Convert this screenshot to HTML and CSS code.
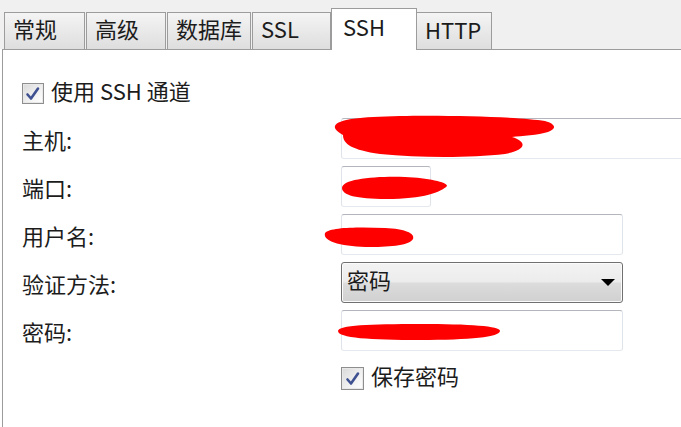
FILE: index.html
```html
<!DOCTYPE html>
<html lang="zh-CN">
<head>
<meta charset="utf-8">
<title>SSH</title>
<link rel="stylesheet" href="styles.css">
</head>
<body>
<div class="window">
  <div class="tabbar">
    <div class="tab t1">常规</div>
    <div class="tab t2">高级</div>
    <div class="tab t3">数据库</div>
    <div class="tab t4">SSL</div>
    <div class="tab active">SSH</div>
    <div class="tab t6">HTTP</div>
  </div>
  <div class="panel">
    <div class="check-row">
      <span class="checkbox"><svg viewBox="0 0 22 22" width="22" height="22"><path d="M5.5 11.5 L9 15.5 L16 5.5" fill="none" stroke="#3f5191" stroke-width="2.6" stroke-linecap="round" stroke-linejoin="round"/></svg></span>
      <span class="check-label">使用 SSH 通道</span>
    </div>
    <div class="form">
      <div class="label">主机:</div>
      <div class="field"><div class="input wide"></div></div>
      <div class="label">端口:</div>
      <div class="field"><div class="input short"></div></div>
      <div class="label">用户名:</div>
      <div class="field"><div class="input mid"></div></div>
      <div class="label">验证方法:</div>
      <div class="field">
        <div class="select mid"><span>密码</span><svg class="arrow" viewBox="0 0 14 7" width="14" height="7"><path d="M0 0 H14 L7 7 Z" fill="#000"/></svg></div>
      </div>
      <div class="label">密码:</div>
      <div class="field"><div class="input mid"></div></div>
    </div>
    <div class="save-row">
      <span class="checkbox"><svg viewBox="0 0 22 22" width="22" height="22"><path d="M5.5 11.5 L9 15.5 L16 5.5" fill="none" stroke="#3f5191" stroke-width="2.6" stroke-linecap="round" stroke-linejoin="round"/></svg></span>
      <span class="check-label">保存密码</span>
    </div>
  </div>
  <svg class="redact" viewBox="0 0 681 427" width="681" height="427">
    <path d="M335 126 C338 119 360 117 400 116 C450 115 520 117 545 121 C556 124 557 129 548 132 C538 135 522 136 512 137 C528 142 526 150 505 154 C470 158 420 158 380 154 C352 150 343 144 343 135 C338 132 334 129 335 126 Z" fill="#ff0000"/>
    <path d="M342 188 C342 179 375 176 405 177 C428 178 447 182 447 186 C441 192 424 199 386 199 C356 199 342 195 342 188 Z" fill="#ff0000"/>
    <path d="M325 233 C330 227 360 227 385 228 C405 229 415 233 413 239 C410 245 392 247 370 247 C345 247 322 242 325 233 Z" fill="#ff0000"/>
    <path d="M338 331 C338 325 370 324 420 324 C470 324 500 326 500 331 C500 337 470 340 420 340 C370 340 338 338 338 331 Z" fill="#ff0000"/>
  </svg>
</div>
</body>
</html>
```

FILE: styles.css
```css
html, body {
  margin: 0;
  padding: 0;
  background: #ffffff;
}

body {
  width: 681px;
  height: 427px;
  overflow: hidden;
  font-family: "Noto Sans CJK SC", "Noto Sans", sans-serif;
  font-size: 22px;
  color: #1c1c1c;
}

.window {
  position: relative;
  width: 681px;
  height: 427px;
  overflow: hidden;
}

.tabbar {
  height: 49px;
  background: #f0f0f0;
  display: flex;
  align-items: flex-end;
  padding-left: 4px;
  box-sizing: border-box;
}

.tab {
  height: 37px;
  box-sizing: border-box;
  border: 1px solid #9c9c9c;
  border-bottom: none;
  background: linear-gradient(#f4f4f4, #e9e9e9 50%, #dedede);
  padding-left: 8px;
  line-height: 31px;
  white-space: nowrap;
  margin-right: 1px;
}

.t1 { width: 81px; }
.t2 { width: 80px; }
.t3 { width: 84px; }
.t4 { width: 79px; margin-right: 0; }

.tab.active {
  position: relative;
  z-index: 1;
  width: 86px;
  height: 42px;
  margin-bottom: -1px;
  background: #ffffff;
  padding-left: 11px;
  line-height: 34px;
  margin-right: 0;
}

.t6 {
  width: 76px;
  margin-left: -1px;
  line-height: 33px;
}

.panel {
  margin-left: 2px;
  border-left: 1px solid #9c9c9c;
  border-top: 1px solid #9c9c9c;
  height: 378px;
  padding-left: 19px;
  box-sizing: border-box;
}

.check-row,
.save-row {
  display: flex;
  align-items: center;
  height: 21px;
}

.check-row {
  margin-top: 33px;
}

.save-row {
  margin-top: 16px;
  padding-left: 319px;
  height: 23px;
}

.checkbox {
  width: 22px;
  height: 21px;
  box-sizing: border-box;
  border: 1px solid #8e8e8e;
  background: linear-gradient(135deg, #d9d9d9, #f6f6f6 70%, #ffffff);
  box-shadow: inset 0 0 0 1px #e8e8e8;
  display: flex;
  align-items: center;
  justify-content: center;
  overflow: hidden;
}

.save-row .checkbox {
  width: 23px;
  height: 23px;
}

.checkbox svg {
  display: block;
  flex: none;
}

.check-label {
  margin-left: 7px;
  line-height: 21px;
  padding-bottom: 6px;
  white-space: nowrap;
}

.form {
  margin-top: 14px;
  display: grid;
  grid-template-columns: 319px 1fr;
  grid-auto-rows: 41px;
  row-gap: 7px;
}

.label {
  display: flex;
  align-items: center;
  white-space: nowrap;
}

.field {
  display: flex;
  align-items: stretch;
}

.input {
  box-sizing: border-box;
  height: 41px;
  border: 1px solid #dfe3ea;
  border-top-color: #b3b6bd;
  border-bottom-color: #e3e9ef;
  border-radius: 3px;
  background: #ffffff;
}

.wide {
  width: 340px;
  border-right: none;
  border-radius: 3px 0 0 3px;
}
.short { width: 90px; }
.mid { width: 282px; }

.select {
  box-sizing: border-box;
  height: 41px;
  border: 1px solid #707070;
  border-radius: 3px;
  background: linear-gradient(#f3f3f3, #ececec 48%, #dcdcdc 52%, #d0d0d0);
  box-shadow: inset 0 0 0 1px #fbfbfb;
  display: flex;
  align-items: center;
  justify-content: space-between;
  padding: 0 7px 0 5px;
}

.select span {
  line-height: 33px;
  padding-bottom: 6px;
}

.arrow {
  display: block;
}

.redact {
  position: absolute;
  left: 0;
  top: 0;
  pointer-events: none;
}
```
